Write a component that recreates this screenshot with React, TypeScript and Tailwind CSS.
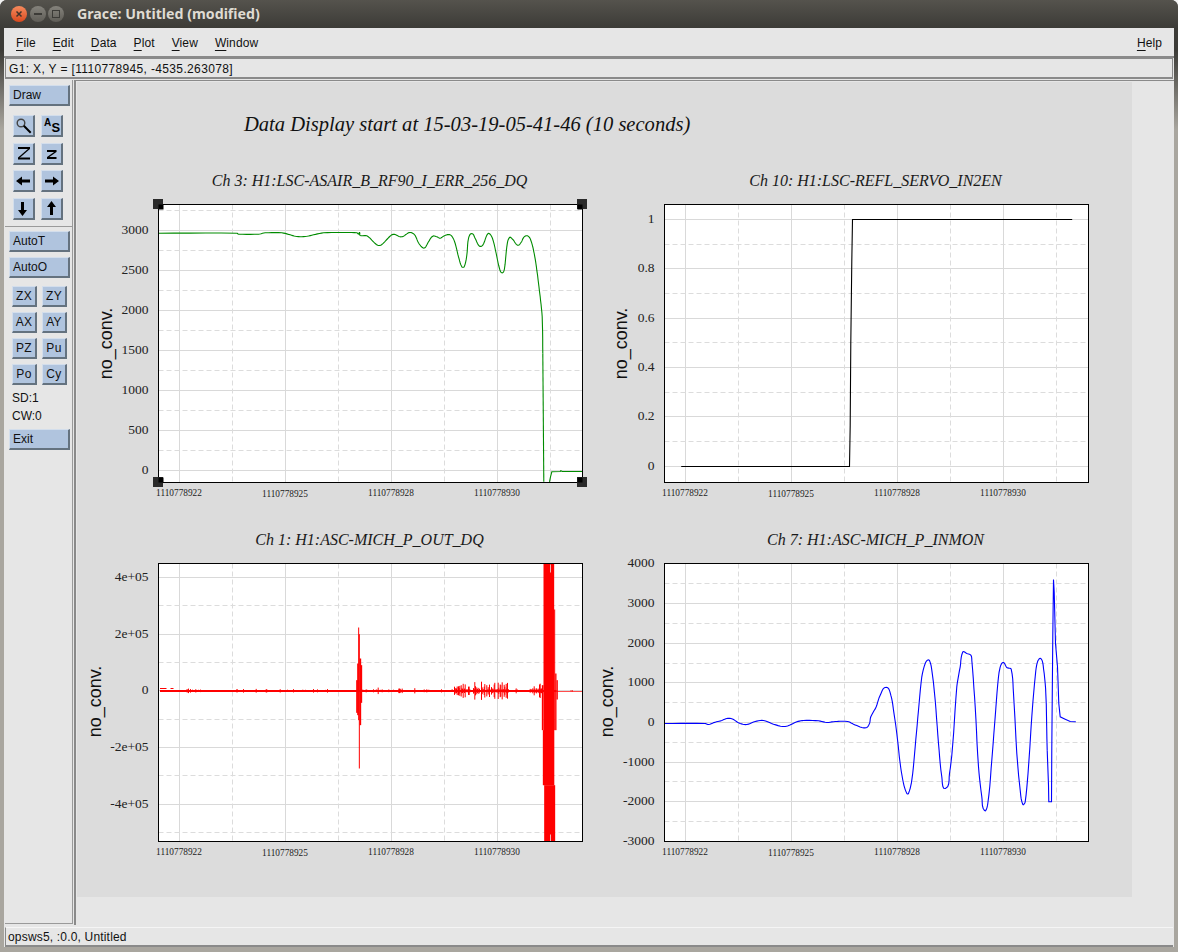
import { ReactNode } from 'react'

type Pt = [number, number]
type Label = [string, number]

const MAJOR_X = [21, 127, 233, 339]
const DASH_X = [74, 180, 286, 392]
const X_LABELS = ['1110778922', '1110778925', '1110778928', '1110778930']

// Traces were read off 3x crops, so they are in crop pixels
const toPoints = (pts: Pt[], ox: number, oy: number) =>
  pts.map(([x, y]) => `${((x - ox) / 3).toFixed(1)},${((y - oy) / 3).toFixed(1)}`).join(' ')

// Hermite through the traced points, tangents scaled by segment length so short steps don't loop
function smooth(pts: Pt[]): Pt[] {
  const dir = (i: number): Pt => {
    const a = pts[Math.max(i - 1, 0)]
    const b = pts[Math.min(i + 1, pts.length - 1)]
    const dx = b[0] - a[0]
    const dy = b[1] - a[1]
    const len = Math.hypot(dx, dy) || 1
    return [dx / len, dy / len]
  }
  const out: Pt[] = []
  for (let i = 0; i < pts.length - 1; i++) {
    const p0 = pts[i]
    const p1 = pts[i + 1]
    const len = Math.hypot(p1[0] - p0[0], p1[1] - p0[1])
    const d0 = dir(i)
    const d1 = dir(i + 1)
    for (let s = 0; s < 5; s++) {
      const t = s / 5
      const h00 = 2 * t ** 3 - 3 * t ** 2 + 1
      const h10 = t ** 3 - 2 * t ** 2 + t
      const h01 = -2 * t ** 3 + 3 * t ** 2
      const h11 = t ** 3 - t ** 2
      out.push([
        h00 * p0[0] + h10 * len * d0[0] + h01 * p1[0] + h11 * len * d1[0],
        h00 * p0[1] + h10 * len * d0[1] + h01 * p1[1] + h11 * len * d1[1],
      ])
    }
  }
  out.push(pts[pts.length - 1])
  return out
}

const GREEN: Pt[] = [
  [205, 219], [440, 219], [445, 222], [505, 222], [525, 218], [575, 218], [600, 224], [620, 229], [645, 229], [670, 224],
  [700, 218], [760, 217], [800, 218], [806, 222], [808, 217], [810, 226], [830, 227], [845, 240], [855, 250], [865, 256],
  [875, 253], [890, 238], [905, 224], [915, 223], [930, 230], [940, 228], [955, 218], [965, 218], [975, 226], [985, 248],
  [998, 263], [1005, 262], [1015, 245], [1028, 228], [1040, 230], [1050, 234], [1060, 228], [1075, 223], [1085, 228],
  [1095, 250], [1105, 290], [1115, 320], [1122, 320], [1130, 285], [1135, 235], [1145, 220], [1155, 235], [1168, 258],
  [1178, 255], [1190, 225], [1197, 220], [1207, 235], [1218, 280], [1228, 325], [1236, 338], [1243, 325], [1250, 260],
  [1258, 232], [1268, 238], [1282, 255], [1292, 248], [1302, 230], [1312, 227], [1322, 240], [1332, 280], [1340, 330],
  [1350, 410], [1356, 470], [1358, 580],
]
const GREEN_DROP: Pt[] = [[1358, 580], [1361, 965]]
const GREEN_TAIL: Pt[] = [[1378, 965], [1381, 950], [1385, 935], [1410, 934], [1412, 932], [1416, 934], [1477, 934]]

const BLUE: Pt[] = [
  [193, 610], [315, 610], [325, 613], [345, 606], [365, 601], [380, 595], [395, 596], [420, 610], [440, 613], [465, 604],
  [490, 601], [520, 612], [555, 619], [590, 605], [610, 601], [655, 602], [680, 607], [705, 604], [742, 604], [760, 612],
  [785, 622], [800, 622], [808, 610], [812, 590], [828, 560], [840, 525], [858, 501], [872, 525], [880, 570], [890, 640],
  [900, 730], [910, 790], [920, 820], [925, 820], [935, 780], [945, 680], [955, 570], [965, 470], [975, 430], [982, 420],
  [988, 421], [995, 450], [1005, 540], [1015, 670], [1025, 770], [1036, 805], [1048, 760], [1058, 670], [1070, 500],
  [1080, 440], [1088, 395], [1100, 400], [1112, 405], [1115, 420], [1125, 560], [1135, 740], [1145, 830], [1153, 871],
  [1163, 850], [1175, 720], [1185, 590], [1195, 470], [1202, 435], [1210, 427], [1220, 442], [1233, 447], [1240, 520],
  [1250, 700], [1260, 810], [1268, 853], [1275, 845], [1285, 740], [1295, 590], [1305, 470], [1312, 425], [1322, 415],
  [1330, 445], [1337, 520], [1341, 690],
]
const BLUE_SPIKE: Pt[] = [
  [1341, 690], [1345, 795], [1346, 845], [1354, 845], [1355, 680], [1358, 345], [1360, 178], [1362, 215], [1366, 370],
  [1372, 440], [1376, 550], [1380, 590], [1395, 597], [1410, 604], [1427, 605],
]

const STEP: Pt[] = [[243, 904], [748, 904], [750, 780], [752, 533], [755, 288], [757, 163], [1416, 163]]

const RED_BLOCKS: [number, number, number, number][] = [
  [798, 803, 480, 578], [801, 806, 430, 585], [804, 807, 322, 600], [806, 809, 342, 745], [808, 813, 415, 615], [812, 816, 435, 548],
  [1355, 1360, 495, 630], [1358, 1392, 630, 795], [1360, 1392, 130, 795], [1392, 1395, 268, 630], [1395, 1399, 460, 630],
  [1399, 1403, 480, 538], [1362, 1395, 795, 965],
]

// regions of the red trace where the noise stands out of the baseline: from, to, height, chance
const RED_NOISE: [number, number, number, number][] = [
  [210, 250, 3, 0.3], [255, 340, 7, 0.6], [440, 740, 6, 0.35], [818, 940, 10, 0.6], [970, 1020, 8, 0.65], [1040, 1075, 5, 0.3],
  [1085, 1140, 24, 0.9], [1150, 1185, 28, 0.9], [1190, 1255, 26, 0.9], [1270, 1290, 12, 0.7], [1320, 1355, 22, 0.9],
  [1440, 1462, 6, 0.4],
]

const rand = (i: number) => {
  const v = Math.sin(i * 12.9898) * 43758.5453
  return v - Math.floor(v)
}

function redNoise() {
  let d = ''
  RED_NOISE.forEach(([from, to, height, chance]) => {
    for (let x = from; x < to; x += 2) {
      if (rand(x) > chance) continue
      const r = rand(x + 1)
      const h = height * (0.15 + 0.85 * r * r * r)
      d += `M${((x - 205) / 3).toFixed(1)} ${((512 - h - 130) / 3).toFixed(1)}V${((512 + h - 130) / 3).toFixed(1)}`
    }
  })
  return d
}

const Z = ({ x, y, w, h }: { x: number; y: number; w: number; h: number }) => (
  <rect x={(x - 205) / 3} y={(y - 130) / 3} width={w / 3} height={h / 3} className="fill-[#ff0000]" />
)

function Plot({
  title,
  yLabels,
  majorY,
  dashY,
  yTitleX,
  yTitleY = 139,
  handles,
  children,
}: {
  title: string
  yLabels: Label[]
  majorY: number[]
  dashY: number[]
  yTitleX: number
  yTitleY?: number
  handles?: boolean
  children: ReactNode
}) {
  return (
    <div className="flex flex-col">
      <div className="h-6 pl-[73px] pt-[2px] w-[496px] flex items-center justify-center text-[16px] italic text-[#1a1a1a] font-['Liberation_Serif',serif] whitespace-nowrap">
        {title}
      </div>
      <svg width={506} height={320} className="overflow-visible">
        <g transform="translate(73.5 12.5)">
          <rect width={424} height={278} className="fill-white" />
          {majorY.map((y) => (
            <line key={y} x1={0} x2={424} y1={y} y2={y} className="stroke-[#d9d9d9]" />
          ))}
          {MAJOR_X.map((x) => (
            <line key={x} x1={x} x2={x} y1={0} y2={278} className="stroke-[#d9d9d9]" />
          ))}
          {dashY.map((y) => (
            <line key={y} x1={0} x2={424} y1={y} y2={y} strokeDasharray="5 3" className="stroke-[#dcdcdc]" />
          ))}
          {DASH_X.map((x) => (
            <line key={x} x1={x} x2={x} y1={0} y2={278} strokeDasharray="5 3" className="stroke-[#dcdcdc]" />
          ))}
          {children}
          <rect width={424} height={278} className="fill-none stroke-black" />
          {yLabels.map(([text, y]) => (
            <text key={text} x={-10} y={y + 3.5} textAnchor="end" className="fill-[#222] text-[13.5px] font-['Liberation_Serif',serif]">
              {text}
            </text>
          ))}
          {X_LABELS.map((text, i) => (
            <text
              key={text}
              x={MAJOR_X[i] - 0.5}
              y={i === 1 ? 292 : 291}
              textAnchor="middle"
              className="fill-[#222] text-[9.3px] font-['Liberation_Serif',serif]"
            >
              {text}
            </text>
          ))}
          <text
            textAnchor="middle"
            transform={`translate(${yTitleX} ${yTitleY}) rotate(-90)`}
            className="fill-[#111] text-[18px] font-['Liberation_Sans',sans-serif]"
          >
            no_conv.
          </text>
          {handles &&
            ([[0, 0], [424, 0], [0, 278], [424, 278]] as Pt[]).map(([x, y]) => (
              <g key={`${x}-${y}`}>
                <rect x={x - 5.5} y={y - 5.5} width={10} height={10} className="fill-[#2a2a2a]" />
                <rect
                  x={x === 0 ? 0 : x - 5}
                  y={y === 0 ? 0 : y - 5}
                  width={5}
                  height={5}
                  className="fill-black"
                />
              </g>
            ))}
        </g>
      </svg>
    </div>
  )
}

function MotifButton({ className, children }: { className: string; children: ReactNode }) {
  return (
    <button
      type="button"
      className={`flex items-center bg-[#b0c4de] border-t border-l border-t-[#d3deec] border-l-[#d3deec] border-r-2 border-b-2 border-r-[#64727f] border-b-[#64727f] text-[12px] leading-none text-[#111] ${className}`}
    >
      {children}
    </button>
  )
}

const IconButton = ({ children }: { children: ReactNode }) => (
  <MotifButton className="h-[22px] w-[22px] justify-center">
    <svg width={19} height={19} viewBox="1 1 19 19" className="shrink-0">
      {children}
    </svg>
  </MotifButton>
)

const WideButton = ({ label, className = '' }: { label: string; className?: string }) => (
  <MotifButton className={`ml-[4px] w-[61px] h-[21px] pl-[3px] ${className}`}>{label}</MotifButton>
)

const SmallButton = ({ label }: { label: string }) => (
  <MotifButton className="h-[21px] w-[25px] justify-center tracking-[0.3px]">{label}</MotifButton>
)

const Mnemonic = ({ label, className = '' }: { label: string; className?: string }) => (
  <span className={className}>
    <span className="underline underline-offset-[3px]">{label[0]}</span>
    {label.slice(1)}
  </span>
)

function LeftPanel() {
  return (
    <div className="ml-px w-[68px] h-[844px] flex flex-col pt-[5px] border-r border-b border-[#999] text-[#111]">
      <WideButton label="Draw" />
      <div className="mt-[9px] ml-[8px] grid grid-cols-[22px_22px] gap-x-[6px] gap-y-[5.5px]">
        <IconButton>
          <circle cx={8} cy={8} r={3.8} className="fill-none stroke-[#444] stroke-[1.4]" />
          <path d="M10.8 10.8L17.7 17.7" className="stroke-black stroke-2" />
        </IconButton>
        <IconButton>
          <text x={3} y={11} className="fill-black text-[10px] font-bold font-['Liberation_Sans',sans-serif]">A</text>
          <text x={10.5} y={17} className="fill-black text-[13px] font-bold font-['Liberation_Sans',sans-serif]">S</text>
        </IconButton>
        <IconButton>
          <path d="M5 5H17M5 15.5H17" className="stroke-black stroke-2" />
          <path d="M16.5 5.5L5.5 15" className="stroke-black stroke-[1.3]" />
        </IconButton>
        <IconButton>
          <path d="M6 8H15.5M6 15H15.5" className="stroke-black stroke-2" />
          <path d="M15 8.5L6.5 14.5" className="stroke-black stroke-[1.5]" />
        </IconButton>
        <IconButton>
          <path d="M3 11L9 6.5V9.5H17V12.5H9V15.5Z" className="fill-black" />
        </IconButton>
        <IconButton>
          <path d="M18 11L12 6.5V9.5H4V12.5H12V15.5Z" className="fill-black" />
        </IconButton>
        <IconButton>
          <path d="M9.5 18L5 12H8V4H11V12H14Z" className="fill-black" />
        </IconButton>
        <IconButton>
          <path d="M10.5 3L6 9H9V17H12V9H15Z" className="fill-black" />
        </IconButton>
      </div>
      <div className="mt-[6px] h-px bg-[#9a9a9a]" />
      <WideButton label="AutoT" className="mt-[4px]" />
      <WideButton label="AutoO" className="mt-[5px]" />
      <div className="mt-[8px] ml-[7px] grid grid-cols-[25px_25px] gap-x-[5px] gap-y-[5px]">
        {['ZX', 'ZY', 'AX', 'AY', 'PZ', 'Pu', 'Po', 'Cy'].map((label) => (
          <SmallButton key={label} label={label} />
        ))}
      </div>
      <div className="mt-[4px] ml-[7px] text-[12px] leading-[18.5px]">
        <p>SD:1</p>
        <p>CW:0</p>
      </div>
      <WideButton label="Exit" className="mt-[3px]" />
    </div>
  )
}

export default function App() {
  const noise = redNoise()
  return (
    <div className="w-[1178px] h-[952px] bg-[#f2f2f2] overflow-hidden font-['Liberation_Sans',sans-serif]">
      <div className="h-full flex flex-col rounded-t-[7px] bg-[linear-gradient(#3c3b37_0px,#3c3b37_50px,#a9a69f_130px)]">
        <div className="h-7 shrink-0 flex items-center rounded-t-[7px] bg-gradient-to-b from-[#55534d] to-[#3c3b37]">
          <div className="ml-[11px] w-4 h-4 rounded-full bg-gradient-to-b from-[#f58a5c] to-[#d9481c] flex items-center justify-center">
            <svg width={8} height={8} viewBox="0 0 8 8">
              <path d="M1.5 1.5L6.5 6.5M6.5 1.5L1.5 6.5" className="stroke-[#41342b] stroke-[1.5]" />
            </svg>
          </div>
          <div className="ml-[3px] w-4 h-4 rounded-full bg-gradient-to-b from-[#85837c] to-[#5f5d57] flex items-center justify-center">
            <div className="w-2 h-[2px] bg-[#3c3b37]" />
          </div>
          <div className="ml-[2px] w-4 h-4 rounded-full bg-gradient-to-b from-[#85837c] to-[#5f5d57] flex items-center justify-center">
            <div className="w-2 h-2 border border-[#3c3b37]" />
          </div>
          <span className="ml-[13px] text-[14.2px] font-bold text-[#dfdbd2] font-['Noto_Sans',sans-serif]">Grace: Untitled (modified)</span>
        </div>

        <div className="mx-1 h-[919px] shrink-0 bg-[#e6e6e6] flex flex-col">
          <div className="h-[30px] shrink-0 border-b-2 border-[#8a8a8a] flex items-center pt-[2px] text-[12px] tracking-[0.1px] text-[#111]">
            <Mnemonic label="File" className="ml-[12px]" />
            <Mnemonic label="Edit" className="ml-[17px]" />
            <Mnemonic label="Data" className="ml-[17px]" />
            <Mnemonic label="Plot" className="ml-[17px]" />
            <Mnemonic label="View" className="ml-[17px]" />
            <Mnemonic label="Window" className="ml-[17px]" />
            <Mnemonic label="Help" className="ml-auto mr-[12px]" />
          </div>
          <div className="mx-px h-[21px] shrink-0 border border-b-2 border-[#8a8a8a] flex items-center pl-[3px] pt-[1px] text-[12px] tracking-[0.35px] text-[#111]">
            G1: X, Y = [1110778945, -4535.263078]
          </div>

          <div className="mt-px h-[845px] shrink-0 flex">
            <LeftPanel />
            <div className="ml-px flex-1 border-l-2 border-t border-[#8a8a8a] pl-px pt-px">
              <div className="w-[1055px] h-[815px] bg-[#dcdcdc] pl-[8px]">
                <div className="pt-[30px] pl-[159px] h-[54px] text-[20.55px] leading-6 italic text-[#111] font-['Liberation_Serif',serif] whitespace-nowrap">
                  Data Display start at 15-03-19-05-41-46 (10 seconds)
                </div>
                <div className="mt-[32px] grid grid-cols-[506px_506px] gap-y-[15px]">
                  <Plot
                    title="Ch 3: H1:LSC-ASAIR_B_RF90_I_ERR_256_DQ"
                    yLabels={[['3000', 26], ['2500', 66], ['2000', 106], ['1500', 146], ['1000', 186], ['500', 226], ['0', 266]]}
                    majorY={[26, 66, 106, 146, 186, 226, 266]}
                    dashY={[6, 46, 86, 126, 166, 206, 246]}
                    yTitleX={-47}
                    handles
                  >
                    <polyline points={toPoints(smooth(GREEN), 205, 133)} className="fill-none stroke-[#008b00] stroke-[1.1]" />
                    <polyline points={toPoints(GREEN_DROP, 205, 133)} className="fill-none stroke-[#008b00] stroke-[1.1]" />
                    <polyline points={toPoints(GREEN_TAIL, 205, 133)} className="fill-none stroke-[#008b00] stroke-[1.1]" />
                  </Plot>
                  <Plot
                    title="Ch 10: H1:LSC-REFL_SERVO_IN2EN"
                    yLabels={[['1', 15], ['0.8', 64], ['0.6', 114], ['0.4', 163], ['0.2', 212], ['0', 262]]}
                    majorY={[15, 64, 114, 163, 212, 262]}
                    dashY={[40, 89, 138, 188, 237]}
                    yTitleX={-37.5}
                  >
                    <polyline points={toPoints(STEP, 193, 118)} className="fill-none stroke-black stroke-[1.1]" />
                  </Plot>
                  <Plot
                    title="Ch 1: H1:ASC-MICH_P_OUT_DQ"
                    yLabels={[['4e+05', 14], ['2e+05', 71], ['0', 127], ['-2e+05', 184], ['-4e+05', 241]]}
                    majorY={[14, 71, 127, 184, 241]}
                    dashY={[42, 99, 156, 212, 269]}
                    yTitleX={-58}
                    yTitleY={138}
                  >
                    <path d="M1.5 125H8M12 125H15" className="stroke-[#ff0000]" />
                    <path d="M1.5 127.5H398" className="stroke-[#ff0000] stroke-2" />
                    <path d="M398 128H424" className="stroke-[#ff0000] stroke-[0.7]" />
                    <path d={noise} className="fill-none stroke-[#ff0000]" />
                    {RED_BLOCKS.map(([x1, x2, y1, y2]) => (
                      <Z key={`${x1}-${y1}`} x={x1} y={y1} w={x2 - x1} h={y2 - y1} />
                    ))}
                    <path d="M392 1V9M392 271V278" className="stroke-[#eeb4b4]" />
                  </Plot>
                  <Plot
                    title="Ch 7: H1:ASC-MICH_P_INMON"
                    yLabels={[['4000', 0], ['3000', 40], ['2000', 80], ['1000', 119], ['0', 159], ['-1000', 199], ['-2000', 238], ['-3000', 278]]}
                    majorY={[40, 80, 119, 159, 199, 238]}
                    dashY={[20, 60, 100, 139, 179, 218, 258]}
                    yTitleX={-51.5}
                    yTitleY={138}
                  >
                    <polyline points={toPoints(smooth(BLUE), 193, 130)} className="fill-none stroke-[#0000ff] stroke-[1.1]" />
                    <polyline points={toPoints(BLUE_SPIKE, 193, 130)} className="fill-none stroke-[#0000ff] stroke-[1.1]" />
                  </Plot>
                </div>
              </div>
            </div>
          </div>

          <div className="mt-[2px] mx-px h-[20px] shrink-0 border-l border-t border-t-[#f5f5f5] border-l-[#8a8a8a] border-b-2 border-b-[#8a8a8a] flex items-center pl-[2px] text-[12px] tracking-[0.18px] text-[#111]">
            opsws5, :0.0, Untitled
          </div>
        </div>
      </div>
    </div>
  )
}
